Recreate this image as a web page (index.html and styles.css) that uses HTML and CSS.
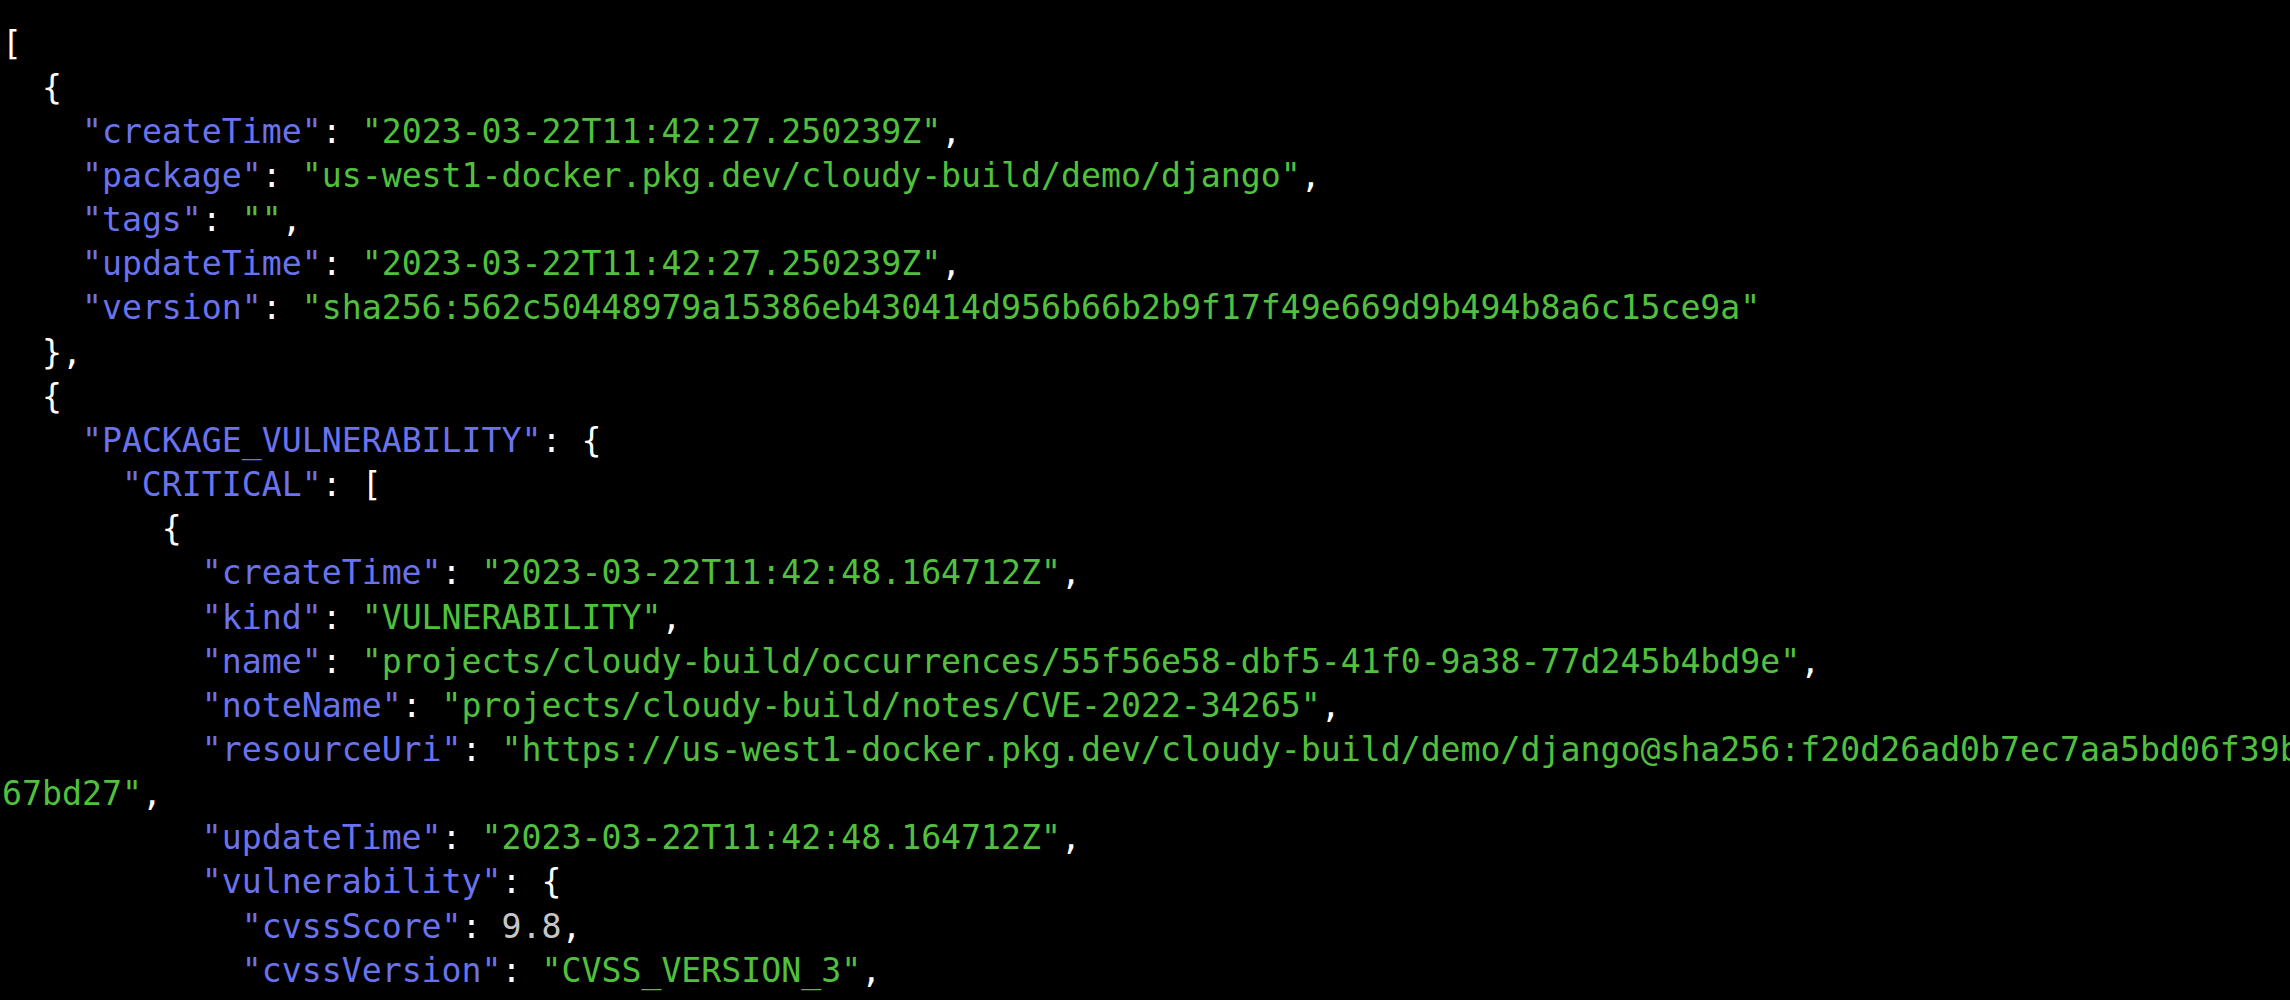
FILE: index.html
```html
<!DOCTYPE html>
<html lang="en">
<head>
<meta charset="utf-8">
<title>JSON output</title>
<link rel="stylesheet" href="styles.css">
</head>
<body>
<main class="term">
<div class="ln">[</div>
<div class="ln">  {</div>
<div class="ln">    <span class="k">"createTime"</span>: <span class="s">"2023-03-22T11:42:27.250239Z"</span>,</div>
<div class="ln">    <span class="k">"package"</span>: <span class="s">"us-west1-docker.pkg.dev/cloudy-build/demo/django"</span>,</div>
<div class="ln">    <span class="k">"tags"</span>: <span class="s">""</span>,</div>
<div class="ln">    <span class="k">"updateTime"</span>: <span class="s">"2023-03-22T11:42:27.250239Z"</span>,</div>
<div class="ln">    <span class="k">"version"</span>: <span class="s">"sha256:562c50448979a15386eb430414d956b66b2b9f17f49e669d9b494b8a6c15ce9a"</span></div>
<div class="ln">  },</div>
<div class="ln">  {</div>
<div class="ln">    <span class="k">"PACKAGE_VULNERABILITY"</span>: {</div>
<div class="ln">      <span class="k">"CRITICAL"</span>: [</div>
<div class="ln">        {</div>
<div class="ln">          <span class="k">"createTime"</span>: <span class="s">"2023-03-22T11:42:48.164712Z"</span>,</div>
<div class="ln">          <span class="k">"kind"</span>: <span class="s">"VULNERABILITY"</span>,</div>
<div class="ln">          <span class="k">"name"</span>: <span class="s">"projects/cloudy-build/occurrences/55f56e58-dbf5-41f0-9a38-77d245b4bd9e"</span>,</div>
<div class="ln">          <span class="k">"noteName"</span>: <span class="s">"projects/cloudy-build/notes/CVE-2022-34265"</span>,</div>
<div class="ln">          <span class="k">"resourceUri"</span>: <span class="s">"https://us-west1-docker.pkg.dev/cloudy-build/demo/django@sha256:f20d26ad0b7ec7aa5bd06f39b</span></div>
<div class="ln"><span class="s">67bd27"</span>,</div>
<div class="ln">          <span class="k">"updateTime"</span>: <span class="s">"2023-03-22T11:42:48.164712Z"</span>,</div>
<div class="ln">          <span class="k">"vulnerability"</span>: {</div>
<div class="ln">            <span class="k">"cvssScore"</span>: <span class="n">9.8</span>,</div>
<div class="ln">            <span class="k">"cvssVersion"</span>: <span class="s">"CVSS_VERSION_3"</span>,</div>
<div class="ln">            <span class="k">"cvssV3"</span>: {</div>
</main>
</body>
</html>
```
FILE: styles.css
```css
html, body {
  margin: 0;
  padding: 0;
  background: #000000;
  overflow: hidden;
  height: 1000px;
}

.term {
  padding: 21.5px 0 0 2px;
  font-family: "DejaVu Sans Mono", "Liberation Mono", monospace;
  font-size: 33.2px;
  line-height: 44.17px;
  color: #ffffff;
  width: 2400px;
}

.ln {
  white-space: pre;
  height: 44.17px;
}

.k {
  color: #6a72ee;
}

.s {
  color: #50c03d;
}

.n {
  color: #c6c6c6;
}
```
